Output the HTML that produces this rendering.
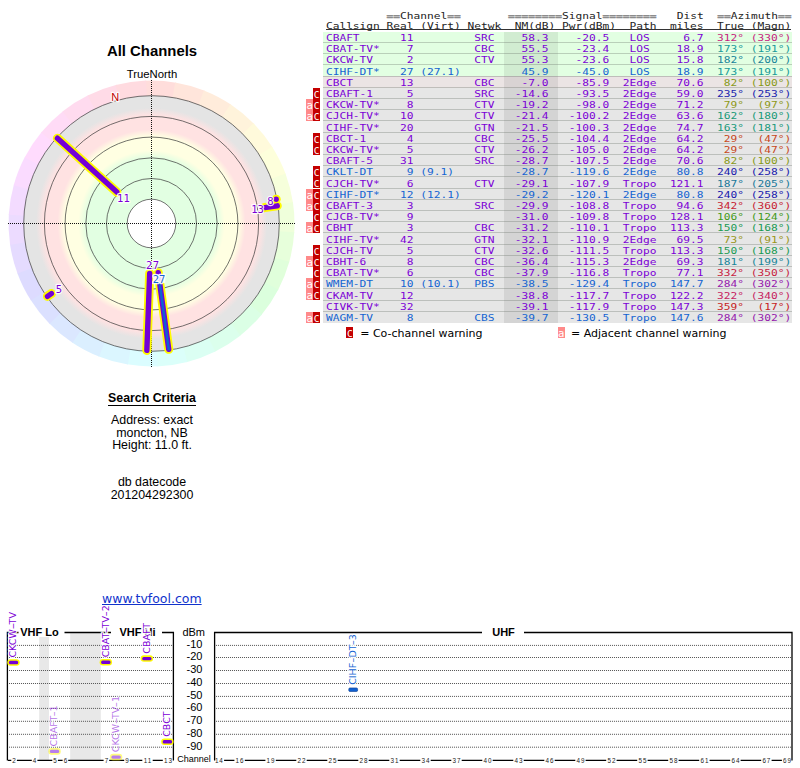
<!DOCTYPE html>
<html><head><meta charset="utf-8"><title>TV Fool - All Channels</title>
<style>
html,body{margin:0;padding:0;background:#fff;}
body{width:800px;height:768px;position:relative;overflow:hidden;font-family:"Liberation Sans",sans-serif;color:#000;}
#gfx{position:absolute;left:0;top:0;}
.t{position:absolute;white-space:pre;line-height:1;}
.c{text-align:center;}
#title{left:52px;width:200px;top:43.7px;font-weight:bold;font-size:14.9px;}
#tn{left:102px;width:100px;top:69px;font-size:11.3px;}
#sc{left:52px;width:200px;top:392.3px;font-weight:bold;font-size:12.35px;}
#scu{position:absolute;left:108px;top:404.8px;width:87.6px;height:1.3px;background:#000;}
.crit{left:52px;width:200px;font-size:12.4px;}
#link{left:102px;top:593.2px;font-family:"DejaVu Sans","Liberation Sans",sans-serif;font-size:12.5px;color:#1133cc;text-decoration:underline;}
.mono{font-family:"DejaVu Sans Mono","Liberation Mono",monospace;}
#tbl{position:absolute;left:0;top:0;}
.row{position:absolute;left:323px;width:469px;height:11.7px;}
.ln{position:absolute;left:323px;width:469px;height:1px;background:rgba(100,110,100,.32);}
.row .nm{position:absolute;left:181px;width:54px;top:0;bottom:0;background:rgba(0,0,0,.075);}
.tx{position:absolute;left:325.9px;transform:scaleY(0.85);transform-origin:0 9.6px;white-space:pre;font-size:11.21px;line-height:11.23px;letter-spacing:0;}
.hd{position:absolute;left:325.9px;transform:scaleY(0.85);transform-origin:0 9.6px;white-space:pre;font-size:11.21px;line-height:11.23px;color:#222;}
.hd i{font-style:normal;color:#8c8c8c;font-weight:bold;-webkit-text-stroke:0.5px #8c8c8c;}
.w{position:absolute;height:11.0px;width:7px;font-size:9.4px;line-height:13.4px;overflow:hidden;text-align:center;color:#fff;font-family:"DejaVu Sans Mono","Liberation Mono",monospace;}
.wa{background:#ff8a8a;font-size:10.6px;line-height:12.2px;}
.wc{background:#c40000;}
.lg{font-family:"DejaVu Sans","Liberation Sans",sans-serif;font-size:11px;top:327.5px;}
</style></head><body>

<svg id="gfx" width="800" height="768" viewBox="0 0 800 768">
<defs>
<radialGradient id="zones" gradientUnits="userSpaceOnUse" cx="151.5" cy="223.5" r="127.8">
<stop offset="0.0000" stop-color="#ffffff"/>
<stop offset="0.1901" stop-color="#ffffff"/>
<stop offset="0.1909" stop-color="#e2ffe2"/>
<stop offset="0.5117" stop-color="#e2ffe2"/>
<stop offset="0.5728" stop-color="#ffffe2"/>
<stop offset="0.6808" stop-color="#ffffe2"/>
<stop offset="0.7355" stop-color="#ffe2e2"/>
<stop offset="0.8451" stop-color="#ffe2e2"/>
<stop offset="0.9038" stop-color="#e4e4e4"/>
<stop offset="1.0000" stop-color="#e4e4e4"/>
</radialGradient>
<filter id="halo" x="-30%" y="-30%" width="160%" height="160%"><feMorphology in="SourceAlpha" operator="dilate" radius="1.2" result="d"/><feGaussianBlur in="d" stdDeviation="0.5" result="b"/><feFlood flood-color="#fff"/><feComposite in2="b" operator="in" result="h"/><feMerge><feMergeNode in="h"/><feMergeNode in="h"/><feMergeNode in="SourceGraphic"/></feMerge></filter>
</defs>
<path d="M151.50 223.50 L145.26 80.64 A143.0 143.0 0 0 1 176.09 82.63 Z" fill="#ffdddb"/>
<path d="M151.50 223.50 L175.10 82.46 A143.0 143.0 0 0 1 204.84 90.82 Z" fill="#ffe5db"/>
<path d="M151.50 223.50 L203.91 90.45 A143.0 143.0 0 0 1 231.26 104.81 Z" fill="#ffecdb"/>
<path d="M151.50 223.50 L230.43 104.25 A143.0 143.0 0 0 1 254.19 123.98 Z" fill="#fff3db"/>
<path d="M151.50 223.50 L253.49 123.27 A143.0 143.0 0 0 1 272.64 147.51 Z" fill="#fffadb"/>
<path d="M151.50 223.50 L272.10 146.67 A143.0 143.0 0 0 1 285.79 174.36 Z" fill="#fdffdb"/>
<path d="M151.50 223.50 L285.44 173.42 A143.0 143.0 0 0 1 293.07 203.35 Z" fill="#f6ffdb"/>
<path d="M151.50 223.50 L292.93 202.36 A143.0 143.0 0 0 1 294.17 233.23 Z" fill="#efffdb"/>
<path d="M151.50 223.50 L294.23 232.23 A143.0 143.0 0 0 1 289.03 262.68 Z" fill="#e7ffdb"/>
<path d="M151.50 223.50 L289.30 261.72 A143.0 143.0 0 0 1 277.88 290.41 Z" fill="#e0ffdb"/>
<path d="M151.50 223.50 L278.34 289.53 A143.0 143.0 0 0 1 261.20 315.23 Z" fill="#dbffdd"/>
<path d="M151.50 223.50 L261.84 314.46 A143.0 143.0 0 0 1 239.74 336.03 Z" fill="#dbffe5"/>
<path d="M151.50 223.50 L240.52 335.41 A143.0 143.0 0 0 1 214.41 351.92 Z" fill="#dbffec"/>
<path d="M151.50 223.50 L215.31 351.48 A143.0 143.0 0 0 1 186.34 362.19 Z" fill="#dbfff3"/>
<path d="M151.50 223.50 L187.30 361.95 A143.0 143.0 0 0 1 156.74 366.40 Z" fill="#dbfffa"/>
<path d="M151.50 223.50 L157.74 366.36 A143.0 143.0 0 0 1 126.91 364.37 Z" fill="#dbfdff"/>
<path d="M151.50 223.50 L127.90 364.54 A143.0 143.0 0 0 1 98.16 356.18 Z" fill="#dbf6ff"/>
<path d="M151.50 223.50 L99.09 356.55 A143.0 143.0 0 0 1 71.74 342.19 Z" fill="#dbefff"/>
<path d="M151.50 223.50 L72.57 342.75 A143.0 143.0 0 0 1 48.81 323.02 Z" fill="#dbe7ff"/>
<path d="M151.50 223.50 L49.51 323.73 A143.0 143.0 0 0 1 30.36 299.49 Z" fill="#dbe0ff"/>
<path d="M151.50 223.50 L30.90 300.33 A143.0 143.0 0 0 1 17.21 272.64 Z" fill="#dddbff"/>
<path d="M151.50 223.50 L17.56 273.58 A143.0 143.0 0 0 1 9.93 243.65 Z" fill="#e5dbff"/>
<path d="M151.50 223.50 L10.07 244.64 A143.0 143.0 0 0 1 8.83 213.77 Z" fill="#ecdbff"/>
<path d="M151.50 223.50 L8.77 214.77 A143.0 143.0 0 0 1 13.97 184.32 Z" fill="#f3dbff"/>
<path d="M151.50 223.50 L13.70 185.28 A143.0 143.0 0 0 1 25.12 156.59 Z" fill="#fadbff"/>
<path d="M151.50 223.50 L24.66 157.47 A143.0 143.0 0 0 1 41.80 131.77 Z" fill="#ffdbfd"/>
<path d="M151.50 223.50 L41.16 132.54 A143.0 143.0 0 0 1 63.26 110.97 Z" fill="#ffdbf6"/>
<path d="M151.50 223.50 L62.48 111.59 A143.0 143.0 0 0 1 88.59 95.08 Z" fill="#ffdbef"/>
<path d="M151.50 223.50 L87.69 95.52 A143.0 143.0 0 0 1 116.66 84.81 Z" fill="#ffdbe7"/>
<path d="M151.50 223.50 L115.70 85.05 A143.0 143.0 0 0 1 146.26 80.60 Z" fill="#ffdbe0"/>
<circle cx="151.5" cy="223.5" r="127.8" fill="url(#zones)"/>
<circle cx="151.5" cy="223.5" r="24.3" fill="none" stroke="#3c3c3c" stroke-width="0.72"/>
<circle cx="151.5" cy="223.5" r="45.0" fill="none" stroke="#3c3c3c" stroke-width="0.72"/>
<circle cx="151.5" cy="223.5" r="65.7" fill="none" stroke="#3c3c3c" stroke-width="0.72"/>
<circle cx="151.5" cy="223.5" r="86.4" fill="none" stroke="#3c3c3c" stroke-width="0.72"/>
<circle cx="151.5" cy="223.5" r="107.1" fill="none" stroke="#3c3c3c" stroke-width="0.72"/>
<circle cx="151.5" cy="223.5" r="127.8" fill="none" stroke="#3c3c3c" stroke-width="0.72"/>
<path d="M8 223.5 H296 M151.5 80 V368" stroke="#111" stroke-width="1" stroke-dasharray="1 1" fill="none"/>
<text x="115.2" y="100.7" font-family="Liberation Sans, sans-serif" font-size="11" fill="#c00000" text-anchor="middle" stroke="#fff" stroke-width="2.4" stroke-linejoin="round" paint-order="stroke" stroke-opacity="0.9">N</text>
<line x1="116.86" y1="192.09" x2="57.42" y2="138.19" stroke="#fffa00" stroke-width="9.1" stroke-linecap="round"/>
<line x1="149.67" y1="273.33" x2="146.85" y2="350.41" stroke="#fffa00" stroke-width="9.1" stroke-linecap="round"/>
<line x1="158.24" y1="272.70" x2="168.74" y2="349.32" stroke="#fffa00" stroke-width="9.1" stroke-linecap="round"/>
<line x1="264.73" y1="207.59" x2="277.26" y2="205.83" stroke="#fffa00" stroke-width="9.1" stroke-linecap="round"/>
<line x1="51.39" y1="293.60" x2="47.47" y2="296.34" stroke="#fffa00" stroke-width="9.1" stroke-linecap="round"/>
<line x1="276.14" y1="199.27" x2="276.17" y2="199.27" stroke="#fffa00" stroke-width="9.1" stroke-linecap="round"/>
<line x1="116.86" y1="192.09" x2="57.42" y2="138.19" stroke="#7400d6" stroke-width="5.4" stroke-linecap="round"/>
<line x1="149.67" y1="273.33" x2="146.85" y2="350.41" stroke="#7400d6" stroke-width="5.4" stroke-linecap="round"/>
<line x1="158.24" y1="272.70" x2="168.74" y2="349.32" stroke="#7400d6" stroke-width="5.4" stroke-linecap="round"/>
<line x1="264.73" y1="207.59" x2="277.26" y2="205.83" stroke="#7400d6" stroke-width="5.4" stroke-linecap="round"/>
<line x1="51.39" y1="293.60" x2="47.47" y2="296.34" stroke="#7400d6" stroke-width="5.4" stroke-linecap="round"/>
<line x1="276.14" y1="199.27" x2="276.17" y2="199.27" stroke="#7400d6" stroke-width="5.4" stroke-linecap="round"/>
<line x1="159.59" y1="282.54" x2="168.74" y2="349.32" stroke="#1060d0" stroke-width="2.6" stroke-linecap="round"/>
<text x="123.4" y="201.8" font-family="DejaVu Sans Mono, Liberation Mono, monospace" font-size="10.5" fill="#7c00d6" text-anchor="middle" stroke="#fff" stroke-width="2.4" stroke-linejoin="round" paint-order="stroke" stroke-opacity="0.9">11</text>
<text x="149.2" y="268.7" font-family="DejaVu Sans Mono, Liberation Mono, monospace" font-size="10.5" fill="#7c00d6" text-anchor="middle" stroke="#fff" stroke-width="2.4" stroke-linejoin="round" paint-order="stroke" stroke-opacity="0.9">2</text>
<text x="156.0" y="268.7" font-family="DejaVu Sans Mono, Liberation Mono, monospace" font-size="10.5" fill="#7c00d6" text-anchor="middle" stroke="#fff" stroke-width="2.4" stroke-linejoin="round" paint-order="stroke" stroke-opacity="0.9">7</text>
<rect x="152.8" y="274.5" width="12.5" height="8.6" fill="#fff" opacity=".85"/>
<text x="159" y="282.6" font-family="DejaVu Sans Mono, Liberation Mono, monospace" font-size="10.5" fill="#1464d2" text-anchor="middle" stroke="#fff" stroke-width="2.4" stroke-linejoin="round" paint-order="stroke" stroke-opacity="0.9">27</text>
<text x="257.5" y="212.6" font-family="DejaVu Sans Mono, Liberation Mono, monospace" font-size="10.5" fill="#7c00d6" text-anchor="middle" stroke="#fff" stroke-width="2.4" stroke-linejoin="round" paint-order="stroke" stroke-opacity="0.9">13</text>
<text x="270.3" y="205.0" font-family="DejaVu Sans Mono, Liberation Mono, monospace" font-size="10.5" fill="#7c00d6" text-anchor="middle" stroke="#fff" stroke-width="2.4" stroke-linejoin="round" paint-order="stroke" stroke-opacity="0.9">8</text>
<text x="59.0" y="292.9" font-family="DejaVu Sans Mono, Liberation Mono, monospace" font-size="10.5" fill="#7c00d6" text-anchor="middle" stroke="#fff" stroke-width="2.4" stroke-linejoin="round" paint-order="stroke" stroke-opacity="0.9">5</text>
<rect x="39.2" y="637" width="9.8" height="123" fill="#e8e8e8"/>
<rect x="70.2" y="633" width="30.6" height="127" fill="#e8e8e8"/>
<path d="M9 645.40 H173 M216 645.40 H791" stroke="#5a5a5a" stroke-width="1" stroke-dasharray="1.05 0.95" fill="none"/>
<path d="M9 657.50 H173 M216 657.50 H791" stroke="#5a5a5a" stroke-width="1" stroke-dasharray="1.05 0.95" fill="none"/>
<path d="M9 670.50 H173 M216 670.50 H791" stroke="#5a5a5a" stroke-width="1" stroke-dasharray="1.05 0.95" fill="none"/>
<path d="M9 683.50 H173 M216 683.50 H791" stroke="#5a5a5a" stroke-width="1" stroke-dasharray="1.05 0.95" fill="none"/>
<path d="M9 696.40 H173 M216 696.40 H791" stroke="#5a5a5a" stroke-width="1" stroke-dasharray="1.05 0.95" fill="none"/>
<path d="M9 708.40 H173 M216 708.40 H791" stroke="#5a5a5a" stroke-width="1" stroke-dasharray="1.05 0.95" fill="none"/>
<path d="M9 721.30 H173 M216 721.30 H791" stroke="#5a5a5a" stroke-width="1" stroke-dasharray="1.05 0.95" fill="none"/>
<path d="M9 734.30 H173 M216 734.30 H791" stroke="#5a5a5a" stroke-width="1" stroke-dasharray="1.05 0.95" fill="none"/>
<path d="M9 747.20 H173 M216 747.20 H791" stroke="#5a5a5a" stroke-width="1" stroke-dasharray="1.05 0.95" fill="none"/>
<path d="M18.5 632.5 H7.4 V760.6" stroke="#000" stroke-width="1.3" fill="none"/>
<path d="M64.5 632.5 H111 M162 632.5 H173.4 V760.6" stroke="#000" stroke-width="1.3" fill="none"/>
<path d="M482 632.5 H214.6 V760.6 M524 632.5 H792 V760.6" stroke="#000" stroke-width="1.3" fill="none"/>
<text x="39.5" y="636.2" font-family="Liberation Sans, sans-serif" font-size="11" font-weight="bold" text-anchor="middle">VHF Lo</text>
<text x="137.5" y="636.2" font-family="Liberation Sans, sans-serif" font-size="11" font-weight="bold" text-anchor="middle">VHF Hi</text>
<text x="503.5" y="636.2" font-family="Liberation Sans, sans-serif" font-size="11" font-weight="bold" text-anchor="middle">UHF</text>
<text x="193.7" y="635.8" font-family="Liberation Sans, sans-serif" font-size="11" text-anchor="middle">dBm</text>
<text x="202.4" y="648.3" font-family="Liberation Sans, sans-serif" font-size="11" text-anchor="end">-10</text>
<text x="202.4" y="660.4" font-family="Liberation Sans, sans-serif" font-size="11" text-anchor="end">-20</text>
<text x="202.4" y="673.4" font-family="Liberation Sans, sans-serif" font-size="11" text-anchor="end">-30</text>
<text x="202.4" y="686.4" font-family="Liberation Sans, sans-serif" font-size="11" text-anchor="end">-40</text>
<text x="202.4" y="699.3" font-family="Liberation Sans, sans-serif" font-size="11" text-anchor="end">-50</text>
<text x="202.4" y="711.3" font-family="Liberation Sans, sans-serif" font-size="11" text-anchor="end">-60</text>
<text x="202.4" y="724.2" font-family="Liberation Sans, sans-serif" font-size="11" text-anchor="end">-70</text>
<text x="202.4" y="737.2" font-family="Liberation Sans, sans-serif" font-size="11" text-anchor="end">-80</text>
<text x="202.4" y="750.1" font-family="Liberation Sans, sans-serif" font-size="11" text-anchor="end">-90</text>
<text x="194" y="762.3" font-family="Liberation Sans, sans-serif" font-size="9" text-anchor="middle">Channel</text>
<text x="14.1" y="762.6" font-family="Liberation Sans, sans-serif" font-size="6.3" text-anchor="middle" fill="#222" letter-spacing="0">2</text>
<text x="34.6" y="762.6" font-family="Liberation Sans, sans-serif" font-size="6.3" text-anchor="middle" fill="#222" letter-spacing="0">4</text>
<text x="55.1" y="762.6" font-family="Liberation Sans, sans-serif" font-size="6.3" text-anchor="middle" fill="#222" letter-spacing="0">5</text>
<text x="65.4" y="762.6" font-family="Liberation Sans, sans-serif" font-size="6.3" text-anchor="middle" fill="#222" letter-spacing="0">6</text>
<text x="106.4" y="762.6" font-family="Liberation Sans, sans-serif" font-size="6.3" text-anchor="middle" fill="#222" letter-spacing="0">7</text>
<text x="127.0" y="762.6" font-family="Liberation Sans, sans-serif" font-size="6.3" text-anchor="middle" fill="#222" letter-spacing="0">9</text>
<text x="147.9" y="762.6" font-family="Liberation Sans, sans-serif" font-size="6.3" text-anchor="middle" fill="#222" letter-spacing="0.9">11</text>
<text x="168.4" y="762.6" font-family="Liberation Sans, sans-serif" font-size="6.3" text-anchor="middle" fill="#222" letter-spacing="0.9">13</text>
<path d="M8.0 760.3 H11.3 M16.9 760.3 H31.8 M37.4 760.3 H52.3 M57.9 760.3 H62.6 M68.2 760.3 H103.6 M109.2 760.3 H124.2 M129.8 760.3 H142.3 M152.7 760.3 H162.8" stroke="#000" stroke-width="1.2" fill="none"/>
<text x="219.3" y="762.6" font-family="Liberation Sans, sans-serif" font-size="6.3" text-anchor="middle" fill="#222" letter-spacing="0.9">14</text>
<text x="240.0" y="762.6" font-family="Liberation Sans, sans-serif" font-size="6.3" text-anchor="middle" fill="#222" letter-spacing="0.9">16</text>
<text x="271.0" y="762.6" font-family="Liberation Sans, sans-serif" font-size="6.3" text-anchor="middle" fill="#222" letter-spacing="0.9">19</text>
<text x="302.0" y="762.6" font-family="Liberation Sans, sans-serif" font-size="6.3" text-anchor="middle" fill="#222" letter-spacing="0.9">22</text>
<text x="333.0" y="762.6" font-family="Liberation Sans, sans-serif" font-size="6.3" text-anchor="middle" fill="#222" letter-spacing="0.9">25</text>
<text x="364.0" y="762.6" font-family="Liberation Sans, sans-serif" font-size="6.3" text-anchor="middle" fill="#222" letter-spacing="0.9">28</text>
<text x="395.0" y="762.6" font-family="Liberation Sans, sans-serif" font-size="6.3" text-anchor="middle" fill="#222" letter-spacing="0.9">31</text>
<text x="425.9" y="762.6" font-family="Liberation Sans, sans-serif" font-size="6.3" text-anchor="middle" fill="#222" letter-spacing="0.9">34</text>
<text x="456.9" y="762.6" font-family="Liberation Sans, sans-serif" font-size="6.3" text-anchor="middle" fill="#222" letter-spacing="0.9">37</text>
<text x="487.9" y="762.6" font-family="Liberation Sans, sans-serif" font-size="6.3" text-anchor="middle" fill="#222" letter-spacing="0.9">40</text>
<text x="518.9" y="762.6" font-family="Liberation Sans, sans-serif" font-size="6.3" text-anchor="middle" fill="#222" letter-spacing="0.9">43</text>
<text x="549.9" y="762.6" font-family="Liberation Sans, sans-serif" font-size="6.3" text-anchor="middle" fill="#222" letter-spacing="0.9">46</text>
<text x="580.9" y="762.6" font-family="Liberation Sans, sans-serif" font-size="6.3" text-anchor="middle" fill="#222" letter-spacing="0.9">49</text>
<text x="611.9" y="762.6" font-family="Liberation Sans, sans-serif" font-size="6.3" text-anchor="middle" fill="#222" letter-spacing="0.9">52</text>
<text x="642.9" y="762.6" font-family="Liberation Sans, sans-serif" font-size="6.3" text-anchor="middle" fill="#222" letter-spacing="0.9">55</text>
<text x="673.9" y="762.6" font-family="Liberation Sans, sans-serif" font-size="6.3" text-anchor="middle" fill="#222" letter-spacing="0.9">58</text>
<text x="704.9" y="762.6" font-family="Liberation Sans, sans-serif" font-size="6.3" text-anchor="middle" fill="#222" letter-spacing="0.9">61</text>
<text x="735.9" y="762.6" font-family="Liberation Sans, sans-serif" font-size="6.3" text-anchor="middle" fill="#222" letter-spacing="0.9">64</text>
<text x="766.8" y="762.6" font-family="Liberation Sans, sans-serif" font-size="6.3" text-anchor="middle" fill="#222" letter-spacing="0.9">67</text>
<text x="787.5" y="762.6" font-family="Liberation Sans, sans-serif" font-size="6.3" text-anchor="middle" fill="#222" letter-spacing="0.9">69</text>
<path d="M224.1 760.3 H234.4 M244.8 760.3 H265.4 M275.8 760.3 H296.3 M306.7 760.3 H327.3 M337.7 760.3 H358.3 M368.7 760.3 H389.3 M399.7 760.3 H420.3 M430.7 760.3 H451.3 M461.7 760.3 H482.3 M492.7 760.3 H513.3 M523.7 760.3 H544.3 M554.7 760.3 H575.3 M585.6 760.3 H606.2 M616.6 760.3 H637.2 M647.6 760.3 H668.2 M678.6 760.3 H699.2 M709.6 760.3 H730.2 M740.6 760.3 H761.2 M771.6 760.3 H781.9" stroke="#000" stroke-width="1.2" fill="none"/>
<g>
<rect x="7.30" y="659.20" width="12.4" height="6.6" rx="3.3" fill="#fffa00"/>
<rect x="8.80" y="660.85" width="9.4" height="3.3" rx="1.5" fill="#7400d6"/>
</g>
<text transform="translate(16.20 657.60) rotate(-90)" x="0" y="0" font-family="DejaVu Sans, Liberation Sans, sans-serif" font-size="9.5" fill="#7c00d6" stroke="#fff" stroke-width="2.2" stroke-linejoin="round" paint-order="stroke" stroke-opacity="0.9">CKCW<tspan textLength="5.2" lengthAdjust="spacingAndGlyphs">-</tspan>TV</text>
<g opacity="0.5">
<rect x="48.34" y="748.11" width="12.4" height="6.6" rx="3.3" fill="#fffa00"/>
<rect x="49.84" y="749.76" width="9.4" height="3.3" rx="1.5" fill="#7400d6"/>
</g>
<text transform="translate(57.24 746.51) rotate(-90)" x="0" y="0" font-family="DejaVu Sans, Liberation Sans, sans-serif" font-size="9.5" fill="#7c00d6" stroke="#fff" stroke-width="2.2" stroke-linejoin="round" paint-order="stroke" stroke-opacity="0.9" opacity="0.55">CBAFT<tspan textLength="5.2" lengthAdjust="spacingAndGlyphs">-</tspan>1</text>
<g>
<rect x="99.64" y="658.94" width="12.4" height="6.6" rx="3.3" fill="#fffa00"/>
<rect x="101.14" y="660.59" width="9.4" height="3.3" rx="1.5" fill="#7400d6"/>
</g>
<text transform="translate(108.54 657.34) rotate(-90)" x="0" y="0" font-family="DejaVu Sans, Liberation Sans, sans-serif" font-size="9.5" fill="#7c00d6" stroke="#fff" stroke-width="2.2" stroke-linejoin="round" paint-order="stroke" stroke-opacity="0.9">CBAT<tspan textLength="5.2" lengthAdjust="spacingAndGlyphs">-</tspan>TV<tspan textLength="5.2" lengthAdjust="spacingAndGlyphs">-</tspan>2</text>
<g opacity="0.5">
<rect x="109.90" y="753.84" width="12.4" height="6.6" rx="3.3" fill="#fffa00"/>
<rect x="111.40" y="755.49" width="9.4" height="3.3" rx="1.5" fill="#7400d6"/>
</g>
<text transform="translate(118.80 752.24) rotate(-90)" x="0" y="0" font-family="DejaVu Sans, Liberation Sans, sans-serif" font-size="9.5" fill="#7c00d6" stroke="#fff" stroke-width="2.2" stroke-linejoin="round" paint-order="stroke" stroke-opacity="0.9" opacity="0.55">CKCW<tspan textLength="5.2" lengthAdjust="spacingAndGlyphs">-</tspan>TV<tspan textLength="5.2" lengthAdjust="spacingAndGlyphs">-</tspan>1</text>
<g>
<rect x="140.68" y="655.26" width="12.4" height="6.6" rx="3.3" fill="#fffa00"/>
<rect x="142.18" y="656.91" width="9.4" height="3.3" rx="1.5" fill="#7400d6"/>
</g>
<text transform="translate(149.58 653.66) rotate(-90)" x="0" y="0" font-family="DejaVu Sans, Liberation Sans, sans-serif" font-size="9.5" fill="#7c00d6" stroke="#fff" stroke-width="2.2" stroke-linejoin="round" paint-order="stroke" stroke-opacity="0.9">CBAFT</text>
<g>
<rect x="161.20" y="738.44" width="12.4" height="6.6" rx="3.3" fill="#fffa00"/>
<rect x="162.70" y="740.09" width="9.4" height="3.3" rx="1.5" fill="#7400d6"/>
</g>
<text transform="translate(170.10 736.84) rotate(-90)" x="0" y="0" font-family="DejaVu Sans, Liberation Sans, sans-serif" font-size="9.5" fill="#7c00d6" stroke="#fff" stroke-width="2.2" stroke-linejoin="round" paint-order="stroke" stroke-opacity="0.9">CBCT</text>
<g>
<rect x="348.79" y="687.92" width="8.8" height="3.6" rx="1.2" fill="#1060d0" stroke="#0a3c90" stroke-width="0.6"/>
</g>
<text transform="translate(355.89 684.82) rotate(-90)" x="0" y="0" font-family="DejaVu Sans, Liberation Sans, sans-serif" font-size="9.5" fill="#1464d2" stroke="#fff" stroke-width="2.2" stroke-linejoin="round" paint-order="stroke" stroke-opacity="0.9">CIHF<tspan textLength="5.2" lengthAdjust="spacingAndGlyphs">-</tspan>DT<tspan textLength="5.2" lengthAdjust="spacingAndGlyphs">-</tspan>3</text>
</svg>
<div class="t c" id="title">All Channels</div>
<div class="t c" id="tn">TrueNorth</div>
<div class="t c" id="sc">Search Criteria</div><div id="scu"></div>
<div class="t c crit" style="top:414.4px">Address: exact</div>
<div class="t c crit" style="top:427.1px">moncton, NB</div>
<div class="t c crit" style="top:439.4px">Height: 11.0 ft.</div>
<div class="t c crit" style="top:476.2px">db datecode</div>
<div class="t c crit" style="top:488.7px">201204292300</div>
<a class="t" id="link">www.tvfool.com</a>
<div id="tbl" class="mono">
<div class="hd" style="top:9.8px">         <i>==</i>Channel<i>==</i>       <i>========</i>Signal<i>========</i>   Dist  <i>==</i>Azimuth<i>==</i></div>
<div class="hd" style="top:20.2px">Callsign Real (Virt) Netwk  NM(dB) Pwr(dBm)  Path  miles  True (Magn)</div>
<div style="position:absolute;left:326px;top:29px;width:465px;height:1.3px;background:#333"></div>
<div class="row" style="top:31.60px;background:#e2ffe2"><div class="nm"></div></div>
<div class="row" style="top:42.80px;background:#e2ffe2"><div class="nm"></div></div>
<div class="row" style="top:54.00px;background:#e2ffe2"><div class="nm"></div></div>
<div class="row" style="top:65.20px;background:#e2ffe2"><div class="nm"></div></div>
<div class="row" style="top:76.40px;background:#ebe4e4"><div class="nm"></div></div>
<div class="row" style="top:87.60px;background:#e6e6e6"><div class="nm"></div></div>
<div class="row" style="top:98.80px;background:#e6e6e6"><div class="nm"></div></div>
<div class="row" style="top:110.00px;background:#e6e6e6"><div class="nm"></div></div>
<div class="row" style="top:121.20px;background:#e6e6e6"><div class="nm"></div></div>
<div class="row" style="top:132.40px;background:#e6e6e6"><div class="nm"></div></div>
<div class="row" style="top:143.60px;background:#e6e6e6"><div class="nm"></div></div>
<div class="row" style="top:154.80px;background:#e6e6e6"><div class="nm"></div></div>
<div class="row" style="top:166.00px;background:#e6e6e6"><div class="nm"></div></div>
<div class="row" style="top:177.20px;background:#e6e6e6"><div class="nm"></div></div>
<div class="row" style="top:188.40px;background:#e6e6e6"><div class="nm"></div></div>
<div class="row" style="top:199.60px;background:#e6e6e6"><div class="nm"></div></div>
<div class="row" style="top:210.80px;background:#e6e6e6"><div class="nm"></div></div>
<div class="row" style="top:222.00px;background:#e6e6e6"><div class="nm"></div></div>
<div class="row" style="top:233.20px;background:#e6e6e6"><div class="nm"></div></div>
<div class="row" style="top:244.40px;background:#e6e6e6"><div class="nm"></div></div>
<div class="row" style="top:255.60px;background:#e6e6e6"><div class="nm"></div></div>
<div class="row" style="top:266.80px;background:#e6e6e6"><div class="nm"></div></div>
<div class="row" style="top:278.00px;background:#e6e6e6"><div class="nm"></div></div>
<div class="row" style="top:289.20px;background:#e6e6e6"><div class="nm"></div></div>
<div class="row" style="top:300.40px;background:#e6e6e6"><div class="nm"></div></div>
<div class="row" style="top:311.60px;background:#e6e6e6"><div class="nm"></div></div>
<div class="ln" style="top:41.90px"></div>
<div class="ln" style="top:53.10px"></div>
<div class="ln" style="top:64.30px"></div>
<div class="ln" style="top:75.50px"></div>
<div class="ln" style="top:86.70px"></div>
<div class="ln" style="top:97.90px"></div>
<div class="ln" style="top:109.10px"></div>
<div class="ln" style="top:120.30px"></div>
<div class="ln" style="top:131.50px"></div>
<div class="ln" style="top:142.70px"></div>
<div class="ln" style="top:153.90px"></div>
<div class="ln" style="top:165.10px"></div>
<div class="ln" style="top:176.30px"></div>
<div class="ln" style="top:187.50px"></div>
<div class="ln" style="top:198.70px"></div>
<div class="ln" style="top:209.90px"></div>
<div class="ln" style="top:221.10px"></div>
<div class="ln" style="top:232.30px"></div>
<div class="ln" style="top:243.50px"></div>
<div class="ln" style="top:254.70px"></div>
<div class="ln" style="top:265.90px"></div>
<div class="ln" style="top:277.10px"></div>
<div class="ln" style="top:288.30px"></div>
<div class="ln" style="top:299.50px"></div>
<div class="ln" style="top:310.70px"></div>
<div class="tx" style="top:31.90px;color:#7c00d6">CBAFT      11         SRC    58.3    -20.5   LOS     6.7  <span style="color:#c71c80">312° (330°)</span></div>
<div class="tx" style="top:43.10px;color:#7c00d6">CBAT-TV*    7         CBC    55.5    -23.4   LOS    18.9  <span style="color:#189999">173° (191°)</span></div>
<div class="tx" style="top:54.30px;color:#7c00d6">CKCW-TV     2         CTV    55.3    -23.6   LOS    15.8  <span style="color:#188399">182° (200°)</span></div>
<div class="tx" style="top:65.50px;color:#1464d2">CIHF-DT*   27 (27.1)         45.9    -45.0   LOS    18.9  <span style="color:#189999">173° (191°)</span></div>
<div class="tx" style="top:76.70px;color:#7c00d6">CBCT       13         CBC    -7.0    -85.9  2Edge   70.6  <span style="color:#869918"> 82° (100°)</span></div>
<div class="tx" style="top:87.90px;color:#7c00d6">CBAFT-1     5         SRC   -14.6    -93.5  2Edge   59.0  <span style="color:#1823ad">235° (253°)</span></div>
<div class="w wc" style="left:313.1px;top:87.70px">C</div>
<div class="tx" style="top:99.10px;color:#7c00d6">CKCW-TV*    8         CTV   -19.2    -98.0  2Edge   71.2  <span style="color:#8e9918"> 79°  (97°)</span></div>
<div class="w wa" style="left:306.1px;top:98.90px">a</div>
<div class="w wc" style="left:313.1px;top:98.90px">C</div>
<div class="tx" style="top:110.30px;color:#7c00d6">CJCH-TV*   10         CTV   -21.4   -100.2  2Edge   63.6  <span style="color:#189977">162° (180°)</span></div>
<div class="w wa" style="left:306.1px;top:110.10px">a</div>
<div class="w wc" style="left:313.1px;top:110.10px">C</div>
<div class="tx" style="top:121.50px;color:#7c00d6">CIHF-TV*   20         GTN   -21.5   -100.3  2Edge   74.7  <span style="color:#18997a">163° (181°)</span></div>
<div class="tx" style="top:132.70px;color:#7c00d6">CBCT-1      4         CBC   -25.5   -104.4  2Edge   64.2  <span style="color:#c7471c"> 29°  (47°)</span></div>
<div class="w wc" style="left:313.1px;top:132.50px">C</div>
<div class="tx" style="top:143.90px;color:#7c00d6">CKCW-TV*    5         CTV   -26.2   -105.0  2Edge   64.2  <span style="color:#c7471c"> 29°  (47°)</span></div>
<div class="w wc" style="left:313.1px;top:143.70px">C</div>
<div class="tx" style="top:155.10px;color:#7c00d6">CBAFT-5    31         SRC   -28.7   -107.5  2Edge   70.6  <span style="color:#869918"> 82° (100°)</span></div>
<div class="tx" style="top:166.30px;color:#1464d2">CKLT-DT     9 (9.1)         -28.7   -119.6  2Edge   80.8  <span style="color:#1818ad">240° (258°)</span></div>
<div class="w wc" style="left:313.1px;top:166.10px">C</div>
<div class="tx" style="top:177.50px;color:#7c00d6">CJCH-TV*    6         CTV   -29.1   -107.9  Tropo  121.1  <span style="color:#187799">187° (205°)</span></div>
<div class="w wc" style="left:313.1px;top:177.30px">C</div>
<div class="tx" style="top:188.70px;color:#1464d2">CIHF-DT*   12 (12.1)        -29.2   -120.1  2Edge   80.8  <span style="color:#1818ad">240° (258°)</span></div>
<div class="w wa" style="left:306.1px;top:188.50px">a</div>
<div class="w wc" style="left:313.1px;top:188.50px">C</div>
<div class="tx" style="top:199.90px;color:#7c00d6">CBAFT-3     3         SRC   -29.9   -108.8  Tropo   94.6  <span style="color:#c71c32">342° (360°)</span></div>
<div class="w wa" style="left:306.1px;top:199.70px">a</div>
<div class="w wc" style="left:313.1px;top:199.70px">C</div>
<div class="tx" style="top:211.10px;color:#7c00d6">CJCB-TV*    9               -31.0   -109.8  Tropo  128.1  <span style="color:#439918">106° (124°)</span></div>
<div class="w wc" style="left:313.1px;top:210.90px">C</div>
<div class="tx" style="top:222.30px;color:#7c00d6">CBHT        3         CBC   -31.2   -110.1  Tropo  113.3  <span style="color:#189952">150° (168°)</span></div>
<div class="w wa" style="left:306.1px;top:222.10px">a</div>
<div class="w wc" style="left:313.1px;top:222.10px">C</div>
<div class="tx" style="top:233.50px;color:#7c00d6">CIHF-TV*   42         GTN   -32.1   -110.9  2Edge   69.5  <span style="color:#999518"> 73°  (91°)</span></div>
<div class="tx" style="top:244.70px;color:#7c00d6">CJCH-TV     5         CTV   -32.6   -111.5  Tropo  113.3  <span style="color:#189952">150° (168°)</span></div>
<div class="w wc" style="left:313.1px;top:244.50px">C</div>
<div class="tx" style="top:255.90px;color:#7c00d6">CBHT-6      8         CBC   -36.4   -115.3  2Edge   69.3  <span style="color:#188599">181° (199°)</span></div>
<div class="w wa" style="left:306.1px;top:255.70px">a</div>
<div class="w wc" style="left:313.1px;top:255.70px">C</div>
<div class="tx" style="top:267.10px;color:#7c00d6">CBAT-TV*    6         CBC   -37.9   -116.8  Tropo   77.1  <span style="color:#c71c3e">332° (350°)</span></div>
<div class="w wc" style="left:313.1px;top:266.90px">C</div>
<div class="tx" style="top:278.30px;color:#1464d2">WMEM-DT    10 (10.1)  PBS   -38.5   -129.4  Tropo  147.7  <span style="color:#9518ad">284° (302°)</span></div>
<div class="w wa" style="left:306.1px;top:278.10px">a</div>
<div class="w wc" style="left:313.1px;top:278.10px">C</div>
<div class="tx" style="top:289.50px;color:#7c00d6">CKAM-TV    12               -38.8   -117.7  Tropo  122.2  <span style="color:#c71c5f">322° (340°)</span></div>
<div class="w wa" style="left:306.1px;top:289.30px">a</div>
<div class="w wc" style="left:313.1px;top:289.30px">C</div>
<div class="tx" style="top:300.70px;color:#7c00d6">CIVK-TV*   32               -39.1   -117.9  Tropo  147.3  <span style="color:#c71c1d">359°  (17°)</span></div>
<div class="tx" style="top:311.90px;color:#1464d2">WAGM-TV     8         CBS   -39.7   -130.5  Tropo  147.6  <span style="color:#9518ad">284° (302°)</span></div>
<div class="w wa" style="left:306.1px;top:311.70px">a</div>
<div class="w wc" style="left:313.1px;top:311.70px">C</div>
</div>
<div class="w wc" style="left:346.4px;top:327px">C</div>
<div class="t lg" style="left:360.2px">= Co-channel warning</div>
<div class="w wa" style="left:557.8px;top:327px">a</div>
<div class="t lg" style="left:571px">= Adjacent channel warning</div>
</body></html>
